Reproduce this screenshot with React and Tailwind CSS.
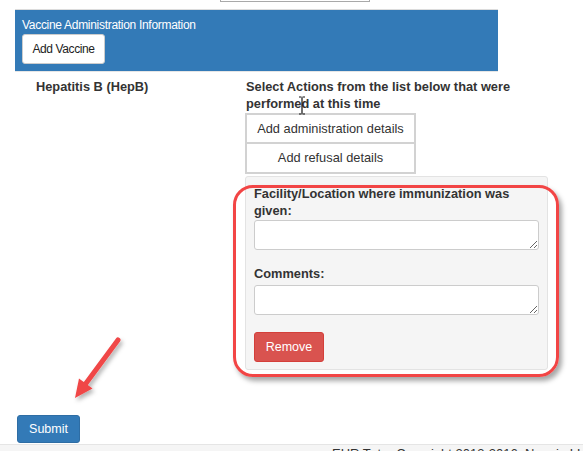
import React from 'react';

const Arrow = () => (
  <svg
    className="absolute left-0 top-0 pointer-events-none"
    width="583"
    height="451"
    viewBox="0 0 583 451"
  >
    <defs>
      <filter id="shade" x="-20%" y="-20%" width="140%" height="140%">
        <feDropShadow dx="2" dy="3" stdDeviation="2" floodColor="#000" floodOpacity="0.3" />
      </filter>
    </defs>
    <g filter="url(#shade)">
      <line x1="118" y1="340" x2="84" y2="386" stroke="#f04646" strokeWidth="5" strokeLinecap="round" />
      <polygon points="75,398 79,378.5 92.5,388.5" fill="#f04646" />
    </g>
  </svg>
);

const Cursor = () => (
  <svg className="absolute left-[298px] top-[96px]" width="8" height="19" viewBox="0 0 8 19">
    <path d="M1 1h2.5M4.5 1H7M4 1.5v16M1 18h2.5M4.5 18H7" stroke="#111" strokeWidth="1.2" fill="none" />
  </svg>
);

const App = () => {
  return (
    <div className="relative w-[583px] h-[451px] overflow-hidden bg-white text-[#333] font-['Liberation_Sans',Arial,sans-serif]">
      <div className="ml-[220px] w-[150px] h-[2px] border-x border-b border-[#a9a9a9]" />

      <div className="mt-[7px] mx-[15px] w-[483px] h-[63px] border-t border-b border-t-[#dcdcdc] border-b-[#e6e6e6] bg-[#337ab7] pl-[7px] pt-[8px]">
        <div className="text-[12px] leading-[14px] tracking-[-0.3px] text-white">Vaccine Administration Information</div>
        <button className="mt-[2px] h-[30px] w-[83px] bg-white border border-[#ccc] rounded-[3px] text-[12px] tracking-[-0.4px] text-[#222]">
          Add Vaccine
        </button>
      </div>

      <div className="flex mt-[6px]">
        <div className="w-[245px] pl-[36px] text-[12.8px] leading-[17px] font-bold">Hepatitis B (HepB)</div>
        <div className="w-[303px]">
          <div className="pl-px text-[12.8px] leading-[17px] font-bold">
            Select Actions from the list below that were performed at this time
          </div>
          <div className="mt-px w-[171px] flex flex-col">
            <button className="h-[31px] border-2 border-[#d2d2d2] bg-white text-[12.8px] text-[#333]">
              Add administration details
            </button>
            <button className="-mt-[2px] h-[32px] border-2 border-[#d2d2d2] bg-white text-[12.8px] text-[#333]">
              Add refusal details
            </button>
          </div>
          <div className="mt-[2px] h-[194px] border border-[#e3e3e3] rounded-[3px] bg-[#f5f5f5] px-[8px] pt-[8px]">
            <div className="text-[12.8px] leading-[17px] font-bold">Facility/Location where immunization was given:</div>
            <textarea className="block mt-px w-full h-[30px] bg-white border border-[#ccc] rounded-[3px]" />
            <div className="mt-[15px] text-[12.8px] leading-[17px] font-bold">Comments:</div>
            <textarea className="block mt-[3px] w-full h-[30px] bg-white border border-[#ccc] rounded-[3px]" />
            <button className="mt-[17px] w-[70px] h-[30px] bg-[#d9534f] border border-[#d43f3a] rounded-[3px] text-white text-[12.5px]">
              Remove
            </button>
          </div>
        </div>
      </div>

      <button className="ml-[17px] mt-[45px] w-[63px] h-[28px] bg-[#337ab7] border border-[#2e6da4] rounded-[3px] text-white text-[12.5px]">
        Submit
      </button>

      <div className="mt-px h-[20px] border-t border-[#e5e5e5] bg-[#f5f5f5] pl-[332px] pt-[1px] text-[13px] leading-[16px] whitespace-nowrap">
        EHR Tutor Copyright 2013-2016, Noggin LLC
      </div>

      <div className="absolute left-[233px] top-[185px] w-[326px] h-[192px] border-[3px] border-[#f24545] rounded-[20px] shadow-[3px_4px_5px_rgba(0,0,0,0.35)] pointer-events-none" />
      <Arrow />
      <Cursor />
    </div>
  );
};

export default App;
